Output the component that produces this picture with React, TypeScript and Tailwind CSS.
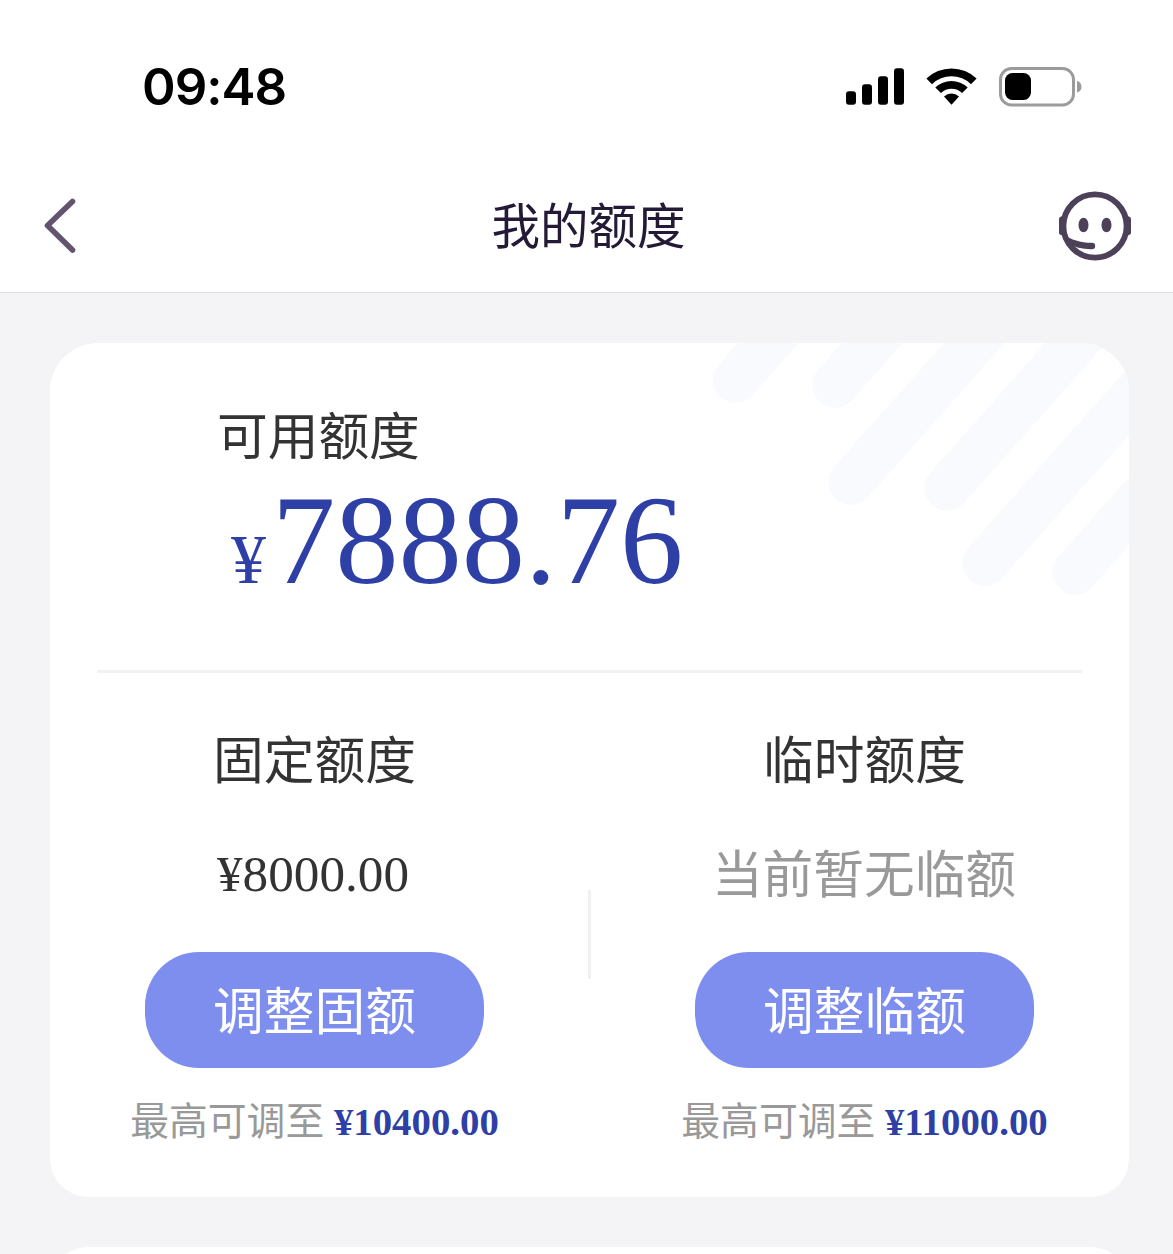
import React from 'react';

interface Quota {
  title: string;
  value: string;
  muted?: boolean;
  action: string;
  max: string;
}

const quotas: Quota[] = [
  { title: '固定额度', value: '¥8000.00', action: '调整固额', max: '¥10400.00' },
  { title: '临时额度', value: '当前暂无临额', muted: true, action: '调整临额', max: '¥11000.00' },
];

// bottom-left ends of the decorative stripes, in card coordinates
const stripes = [
  [685.5, 37],
  [785, 42],
  [801, 139],
  [897, 145],
  [935, 220],
  [1025, 229],
];

const StatusBar: React.FC = () => (
  <div className="flex h-[160px] items-start justify-between pl-[142px] pr-[91px] pt-[56px]">
    <span className="font-['Inter'] text-[51px] font-semibold leading-[62px] tracking-[-1px] text-black">09:48</span>
    <div className="flex items-center gap-[22px] pt-[11px]">
      <svg width="58" height="38" viewBox="0 0.8 58 38">
        <rect x="0" y="24" width="10" height="13.5" rx="3" />
        <rect x="16" y="17" width="10" height="20.5" rx="3" />
        <rect x="32" y="9" width="10" height="28.5" rx="3" />
        <rect x="48" y="1" width="10" height="36.5" rx="3" />
      </svg>
      <svg width="51" height="38" viewBox="0 0.8 51 38">
        <path d="M0.4 11.4a36 36 0 0 1 50.2 0l-5.6 5.6a28 28 0 0 0-39 0z" />
        <path d="M9.3 20.3a23.5 23.5 0 0 1 32.4 0l-5.6 5.6a15.4 15.4 0 0 0-21.2 0z" />
        <path d="M18 29.2a11 11 0 0 1 15 0L25.5 37.5z" />
      </svg>
      <svg width="83" height="40" viewBox="0 0 83 40">
        <rect x="1.5" y="1.5" width="73" height="36.5" rx="11" fill="none" stroke="#9b9b9b" strokeWidth="3" />
        <rect x="6" y="6" width="26" height="27" rx="7.5" />
        <path d="M78 14a6 6 0 0 1 0 11.6z" fill="#9b9b9b" />
      </svg>
    </div>
  </div>
);

const NavBar: React.FC = () => (
  <div className="flex h-[133px] items-center justify-between border-b border-[#dcdcde] px-[40px]">
    <button className="w-[76px]">
      <svg width="40" height="60" viewBox="0 0 40 60" fill="none" stroke="#62546f" strokeWidth="5.6" strokeLinecap="round" strokeLinejoin="round">
        <path d="M32.5 5.5L7.5 29.5L32.5 54" />
      </svg>
    </button>
    <h1 className="pl-[4px] pt-[4px] text-[48.5px] leading-[60px] text-[#241a35]">我的额度</h1>
    <button className="w-[76px]">
      <svg width="76" height="72" viewBox="0 0 76 72" fill="#4c4159">
        <circle cx="38" cy="36" r="31.6" fill="none" stroke="#4c4159" strokeWidth="5.8" />
        <path d="M9 25L4 26.5Q2 27 2 29V43Q2 44.5 4 45L9 47zM67 25L72 26.5Q74 27 74 29V43Q74 44.5 72 45L67 47z" />
        <ellipse cx="26.5" cy="35" rx="5" ry="7.3" />
        <ellipse cx="49.5" cy="35" rx="5" ry="7.3" />
        <path d="M7 45C14 49.5 23 52.8 35 52.8a3.2 3.2 0 0 1 0 6.4C26 59.4 18 57.5 10 53z" />
      </svg>
    </button>
  </div>
);

const QuotaColumn: React.FC<Quota> = ({ title, value, muted, action, max }) => (
  <div className="flex w-[339px] flex-col items-center whitespace-nowrap">
    <h2 className="text-[50.7px] leading-[60px] text-[#333333]">{title}</h2>
    {muted ? (
      <p className="mt-[54px] pr-[1px] text-[50.7px] leading-[60px] text-[#999999]">{value}</p>
    ) : (
      <p className="mt-[52px] mb-[2px] pr-[3px] text-[51.2px] leading-[60px] text-[#333333]">{value}</p>
    )}
    <button className="mt-[46px] h-[116px] w-full rounded-[54px] bg-[#7e8eef] pt-[5px] text-[50.7px] leading-[60px] text-white">
      {action}
    </button>
    <p className="mt-[30px] text-[38.8px] leading-[48px] text-[#999999]">
      最高可调至 <span className="font-bold text-[#2e3fa6]">{max}</span>
    </p>
  </div>
);

export default function App() {
  return (
    <div className="h-[1254px] w-[1173px] overflow-hidden bg-[#f4f4f6] font-['Liberation_Serif','Noto_Sans_CJK_SC',sans-serif]">
      <header className="bg-white">
        <StatusBar />
        <NavBar />
      </header>

      <main className="pl-[50px] pr-[44px] pt-[50px]">
        <section className="relative h-[854px] overflow-hidden rounded-t-[48px] rounded-b-[38px] bg-white">
          <svg className="absolute inset-0" width="1079" height="300" viewBox="0 0 1079 300" stroke="#f8fafe" strokeWidth="45.5" strokeLinecap="round">
            {stripes.map(([x, y]) => (
              <line key={x} x1={x} y1={y} x2={x + 332} y2={y - 374} />
            ))}
          </svg>

          <div className="relative mx-[47px] h-[330px] border-b-[3px] border-[#f2f2f4] pl-[120px] pt-[65px]">
            <h2 className="text-[50.7px] leading-[60px] text-[#333333]">可用额度</h2>
            <p className="flex items-baseline pl-[14px] pt-[12px] text-[#2e3fa6]">
              <span className="text-[70px] leading-[120px]">¥</span>
              <span className="pl-[6px] text-[126.5px] leading-[120px]">7888.76</span>
            </p>
          </div>

          <div className="flex justify-between px-[95px] pt-[59px]">
            <QuotaColumn {...quotas[0]} />
            <div className="mt-[158px] h-[89px] w-[3px] bg-[#f0f0f2]" />
            <QuotaColumn {...quotas[1]} />
          </div>
        </section>

        <section className="mt-[50px] h-[100px] rounded-[38px] bg-white" />
      </main>
    </div>
  );
}
